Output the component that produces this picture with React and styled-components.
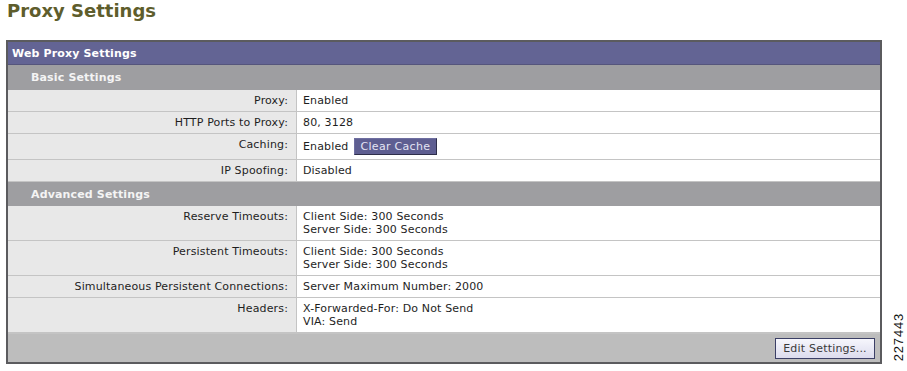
import React from "react";
import styled, { createGlobalStyle } from "styled-components";

const GlobalStyle = createGlobalStyle`
  html, body {
    margin: 0;
    padding: 0;
    background: #ffffff;
  }
  body {
    font-family: "DejaVu Sans", Verdana, sans-serif;
    font-size: 11px;
    letter-spacing: 0.15px;
    color: #1e1e1e;
  }
`;

const basic = [
  { label: "Proxy:", value: ["Enabled"] },
  { label: "HTTP Ports to Proxy:", value: ["80, 3128"] },
  { label: "Caching:", value: ["Enabled"], button: "Clear Cache" },
  { label: "IP Spoofing:", value: ["Disabled"] }
];

const advanced = [
  {
    label: "Reserve Timeouts:",
    value: ["Client Side: 300 Seconds", "Server Side: 300 Seconds"]
  },
  {
    label: "Persistent Timeouts:",
    value: ["Client Side: 300 Seconds", "Server Side: 300 Seconds"]
  },
  {
    label: "Simultaneous Persistent Connections:",
    value: ["Server Maximum Number: 2000"]
  },
  {
    label: "Headers:",
    value: ["X-Forwarded-For: Do Not Send", "VIA: Send"]
  }
];

function SettingRows({ rows }) {
  return rows.map((item, index) => (
    <Row key={index}>
      <Label>{item.label}</Label>
      <Value>
        <Lines>
          {item.value.map((line, i) => (
            <span key={i}>{line}</span>
          ))}
        </Lines>
        {item.button && <CacheButton>{item.button}</CacheButton>}
      </Value>
    </Row>
  ));
}

export default function App() {
  return (
    <Page>
      <GlobalStyle />
      <Title>Proxy Settings</Title>
      <Body>
        <Panel>
          <PanelHeader>Web Proxy Settings</PanelHeader>
          <SectionHeader $height={25}>Basic Settings</SectionHeader>
          <SettingRows rows={basic} />
          <SectionHeader $height={24}>Advanced Settings</SectionHeader>
          <SettingRows rows={advanced} />
          <Footer>
            <EditButton>Edit Settings...</EditButton>
          </Footer>
        </Panel>
        <FigureNumber>227443</FigureNumber>
      </Body>
    </Page>
  );
}

const Page = styled.div`
  width: 907px;
  height: 371px;
  overflow: hidden;
`;

const Title = styled.h1`
  margin: 0;
  padding: 0 0 0 7px;
  height: 40px;
  font-family: "DejaVu Sans", Verdana, sans-serif;
  font-size: 18px;
  line-height: 22px;
  letter-spacing: 0;
  font-weight: 700;
  color: #5e5d2c;
`;

const Body = styled.div`
  display: flex;
  align-items: flex-end;
  padding-left: 6px;
`;

const Panel = styled.div`
  width: 872px;
  border: 2px solid #5b5b5e;
  display: flex;
  flex-direction: column;
`;

const PanelHeader = styled.div`
  height: 22px;
  line-height: 23px;
  padding-left: 4px;
  background: #636494;
  color: #ffffff;
  font-weight: 700;
  border-bottom: 1px solid #55557c;
`;

const SectionHeader = styled.div`
  height: ${(p) => p.$height}px;
  line-height: ${(p) => p.$height + 1}px;
  padding-left: 23px;
  background: #9e9ea1;
  color: #f4f4f4;
  font-weight: 700;
`;

const Row = styled.div`
  display: grid;
  grid-template-columns: 289px 1fr;
  border-bottom: 1px solid #c4c4c4;
  &:last-of-type {
    border-bottom: none;
  }
`;

const Label = styled.div`
  background: #e8e8e8;
  border-right: 1px solid #c4c4c4;
  text-align: right;
  padding: 4px 8px 4px 0;
  line-height: 13px;
  display: flex;
  justify-content: flex-end;
  align-items: flex-start;
  white-space: nowrap;
`;

const Value = styled.div`
  background: #ffffff;
  padding: 4px 6px;
  line-height: 13px;
  display: flex;
  align-items: center;
  gap: 5px;
`;

const Lines = styled.div`
  display: flex;
  flex-direction: column;
`;

const CacheButton = styled.button`
  height: 17px;
  padding: 0 6px;
  margin: 0;
  font-family: "DejaVu Sans", Verdana, sans-serif;
  font-size: 11px;
  letter-spacing: 0.3px;
  line-height: 15px;
  color: #e4e4f4;
  background: #5e5e91;
  border: 1px solid #6e6ea0;
  border-right-color: #2e2e4a;
  border-bottom-color: #2e2e4a;
  border-radius: 0;
`;

const Footer = styled.div`
  height: 29px;
  background: #bdbdbd;
  border-top: 1px solid #c4c4c4;
  display: flex;
  justify-content: flex-end;
  align-items: flex-start;
  padding: 4px 5px 0 0;
  box-sizing: border-box;
`;

const EditButton = styled.button`
  height: 21px;
  width: 100px;
  padding: 0;
  margin: 0;
  font-family: "DejaVu Sans", Verdana, sans-serif;
  font-size: 11px;
  letter-spacing: 0.2px;
  color: #3a3a3a;
  background: linear-gradient(#f6f6fc, #dcdcee);
  border: 1px solid #3b3f66;
  border-radius: 0;
`;

const FigureNumber = styled.div`
  writing-mode: vertical-rl;
  transform: rotate(180deg);
  font-family: "Liberation Sans", Arial, sans-serif;
  font-size: 13px;
  color: #111111;
  margin: 0 0 3px 9px;
  letter-spacing: 0.8px;
`;
